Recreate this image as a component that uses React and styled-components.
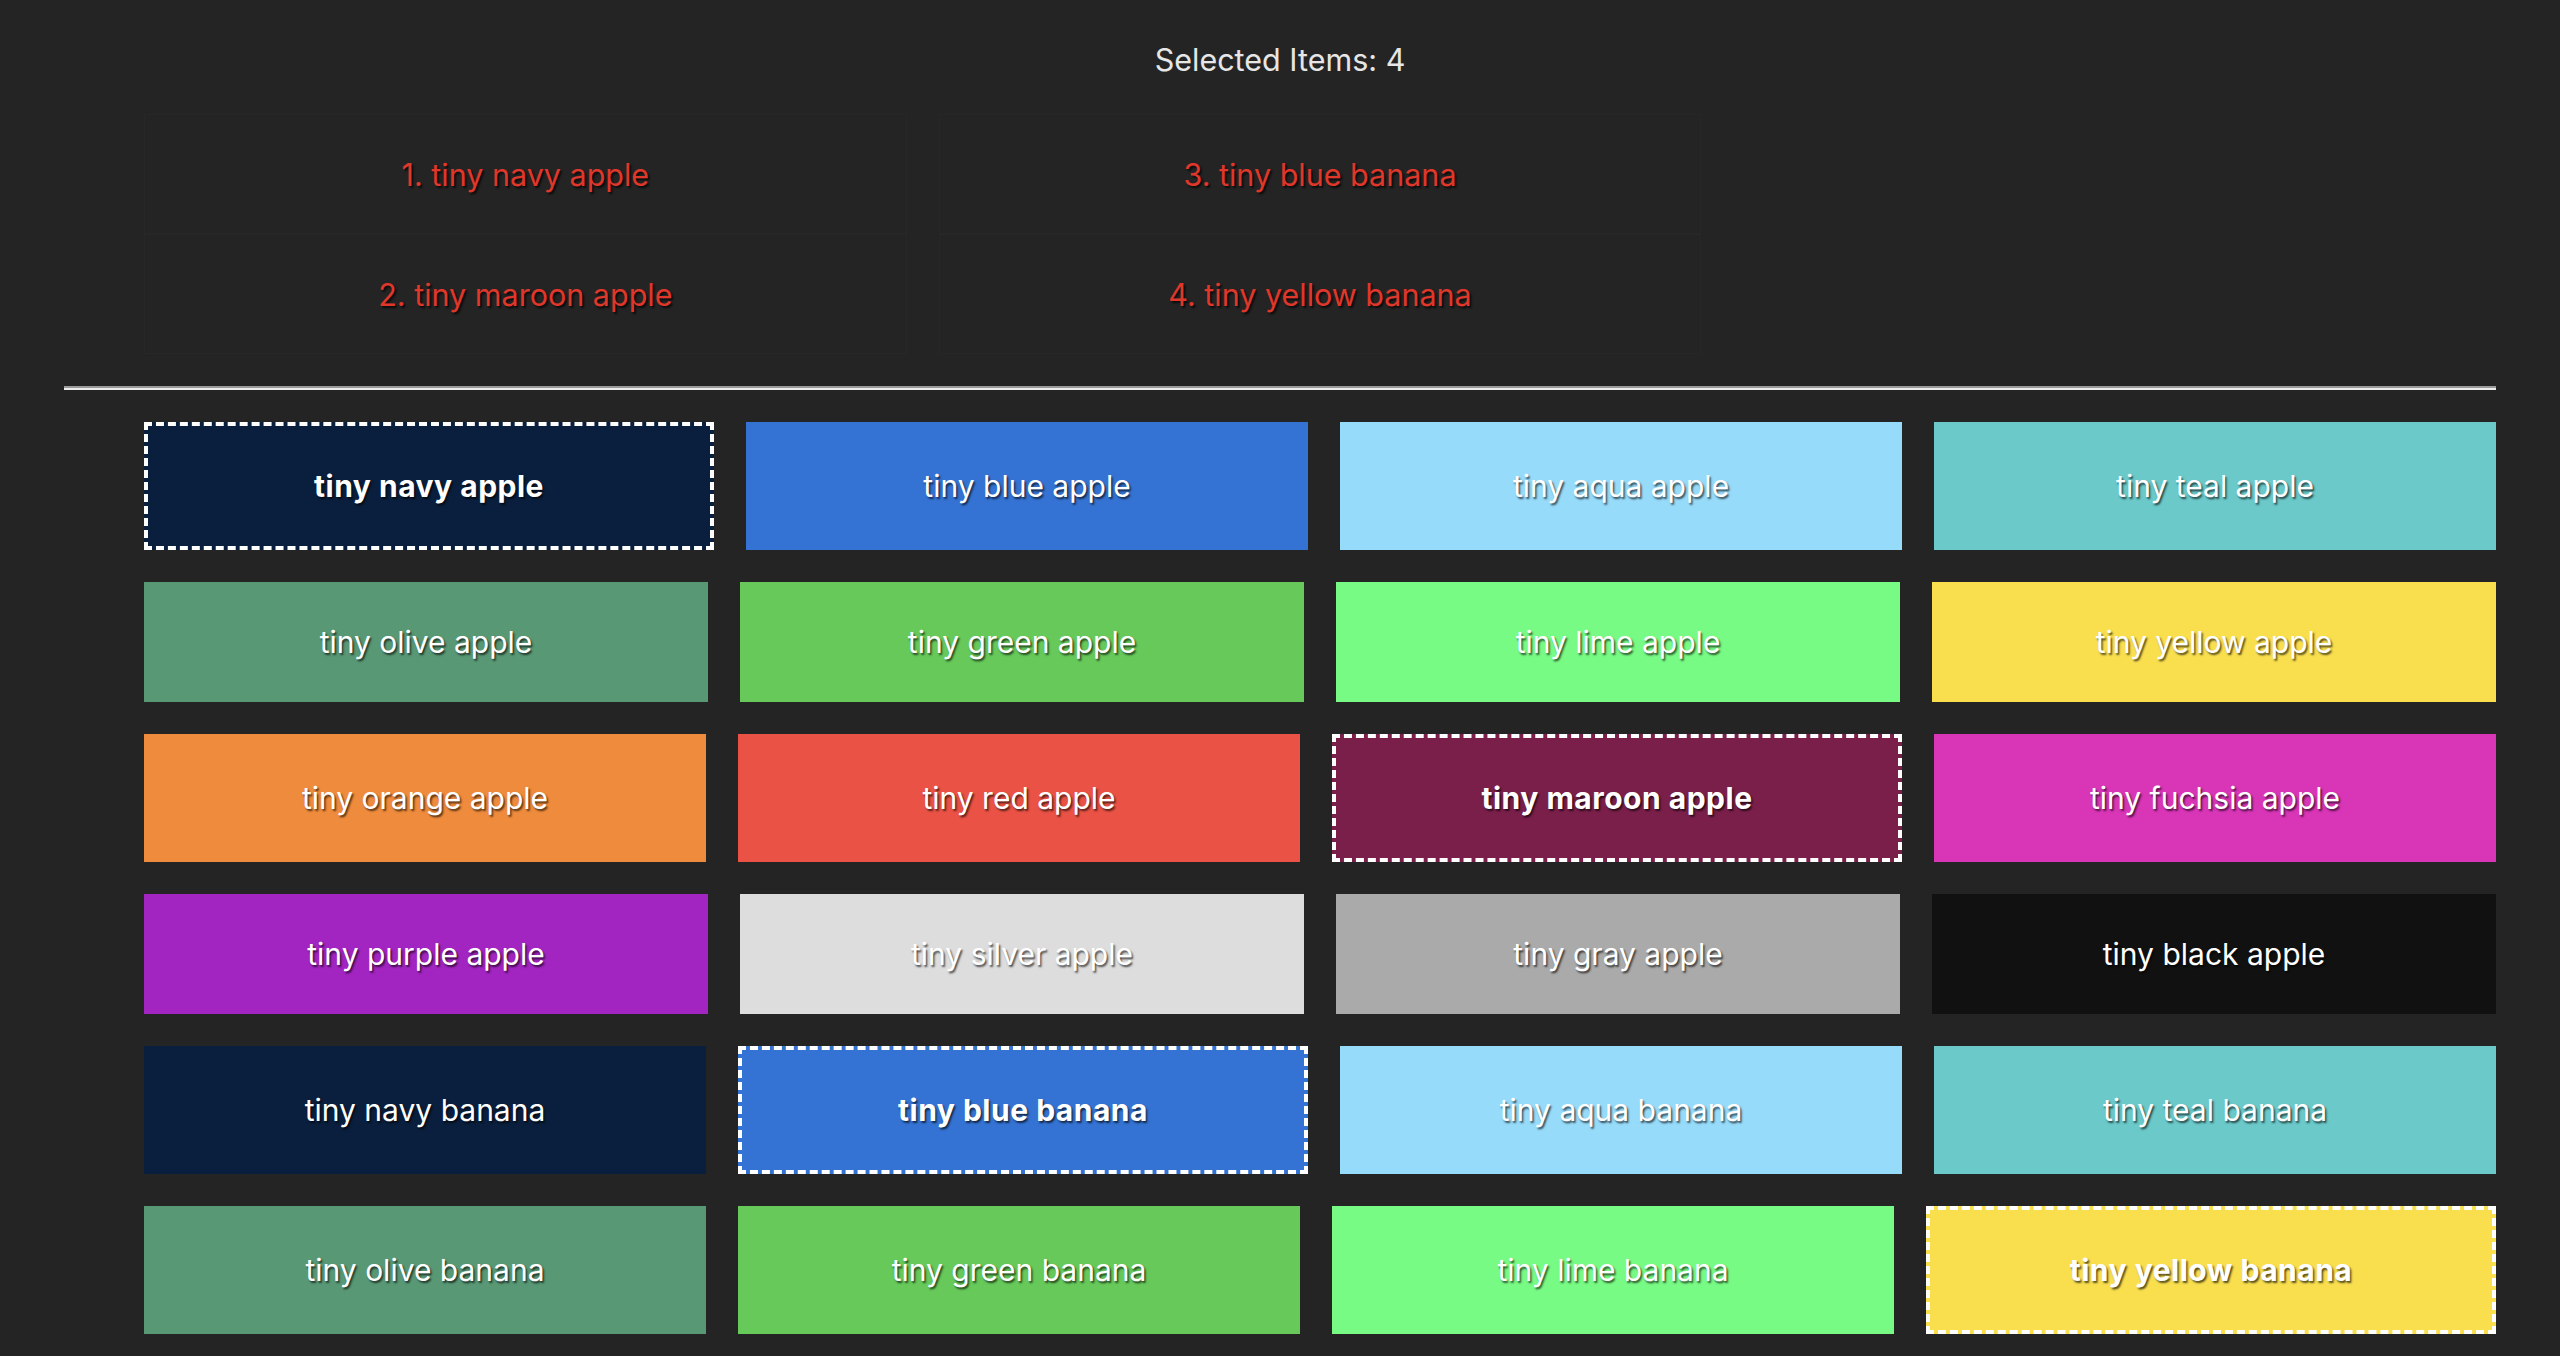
import React from 'react';
import styled, { createGlobalStyle } from 'styled-components';

const GlobalStyle = createGlobalStyle`
  body {
    margin: 0;
    background: #242424;
    font-family: Inter, "Noto Sans", "Liberation Sans", sans-serif;
    color: #e6e6e6;
  }
`;

const COLORS = {
  navy: '#0a1f3d',
  blue: '#3473d3',
  aqua: '#97dbfa',
  teal: '#6bc9c9',
  olive: '#589875',
  green: '#66c95a',
  lime: '#78fb84',
  yellow: '#f9df4e',
  orange: '#ef8b3c',
  red: '#e95244',
  maroon: '#7a1f4a',
  fuchsia: '#d935b7',
  purple: '#a224c1',
  silver: '#dddddd',
  gray: '#aaaaaa',
  black: '#111111',
};

// only the six rows that fit on screen
const ITEMS = ['apple', 'banana']
  .flatMap((fruit) =>
    Object.keys(COLORS).map((color) => ({
      id: `${color}-${fruit}`,
      name: `tiny ${color} ${fruit}`,
      color,
    }))
  )
  .slice(0, 24);

const SELECTED = ['navy-apple', 'maroon-apple', 'blue-banana', 'yellow-banana'];

const Header = styled.div`
  padding-top: 36px;
  text-align: center;
  font-size: 30.5px;
  line-height: 48px;
  color: #e6e6e6;
`;

const SelectedList = styled.div`
  display: grid;
  grid-template-columns: repeat(3, 1fr);
  grid-template-rows: repeat(2, 120px);
  grid-auto-flow: column;
  column-gap: 32px;
  margin: 30px 64px 0 144px;
`;

const SelectedItem = styled.div`
  display: flex;
  align-items: center;
  justify-content: center;
  border: 1px solid #272727;
  font-size: 30.5px;
  color: #e0372b;
  text-shadow: 2px 2px 2px rgba(0, 0, 0, 0.7);
`;

const Divider = styled.hr`
  margin: 32px 64px 0;
  height: 0;
  border: none;
  border-top: 2px solid #9b9b9b;
  border-bottom: 2px solid #ececec;
`;

const Board = styled.div`
  display: flex;
  flex-direction: column;
  gap: 32px;
  padding: 32px 64px 32px 144px;
`;

const Row = styled.div`
  display: flex;
  gap: 32px;
`;

const Tile = styled.div`
  flex: 1 1 0;
  min-height: 120px;
  display: flex;
  align-items: center;
  justify-content: center;
  background: ${(p) => p.$bg};
  border: ${(p) => (p.$selected ? '4px dashed #ffffff' : 'none')};
  font-size: 30px;
  font-weight: ${(p) => (p.$selected ? 700 : 400)};
  letter-spacing: ${(p) => (p.$selected ? '0.5px' : '0')};
  color: #ffffff;
  text-shadow: 1.5px 2px 2px rgba(0, 0, 0, 0.65);
  cursor: pointer;
`;

function App() {
  const selected = SELECTED.map((id) => ITEMS.find((i) => i.id === id));

  const rows = [];
  for (let i = 0; i < ITEMS.length; i += 4) rows.push(ITEMS.slice(i, i + 4));

  return (
    <>
      <GlobalStyle />
      <Header>Selected Items: {selected.length}</Header>
      <SelectedList>
        {selected.map((item, index) => (
          <SelectedItem key={item.id}>
            {index + 1}. {item.name}
          </SelectedItem>
        ))}
      </SelectedList>
      <Divider />
      <Board>
        {rows.map((row, r) => (
          <Row key={r}>
            {row.map((item) => (
              <Tile
                key={item.id}
                $bg={COLORS[item.color]}
                $selected={SELECTED.includes(item.id)}
              >
                {item.name}
              </Tile>
            ))}
          </Row>
        ))}
      </Board>
    </>
  );
}

export default App;
